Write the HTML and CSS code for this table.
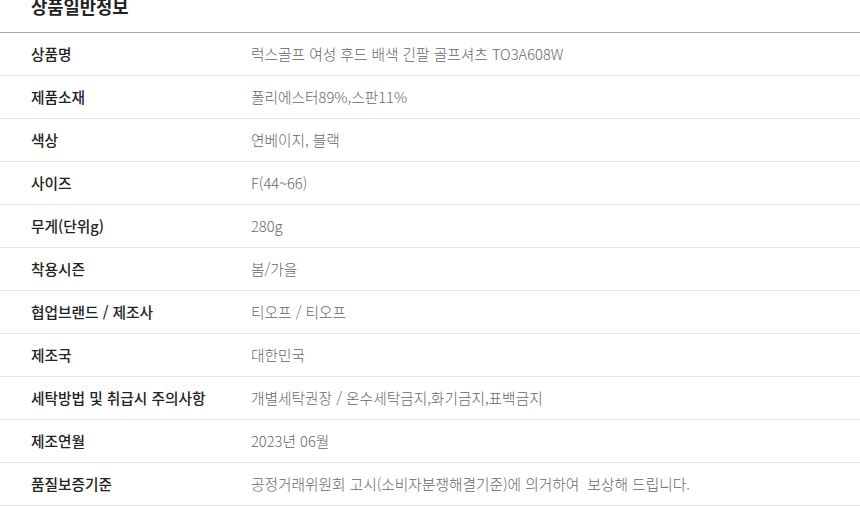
FILE: index.html
```html
<!DOCTYPE html>
<html lang="ko">
<head>
<meta charset="utf-8">
<link rel="stylesheet" href="styles.css">
</head>
<body>
<div class="info">
  <div class="info-head"><h2 class="info-title">상품일반정보</h2></div>
  <div class="info-table">
    <div class="row"><div class="label">상품명</div><div class="value">럭스골프 여성 후드 배색 긴팔 골프셔츠 TO3A608W</div></div>
    <div class="row"><div class="label">제품소재</div><div class="value">폴리에스터89%,스판11%</div></div>
    <div class="row"><div class="label">색상</div><div class="value">연베이지, 블랙</div></div>
    <div class="row"><div class="label">사이즈</div><div class="value">F(44~66)</div></div>
    <div class="row"><div class="label">무게(단위g)</div><div class="value">280g</div></div>
    <div class="row"><div class="label">착용시즌</div><div class="value">봄/가을</div></div>
    <div class="row"><div class="label">협업브랜드 / 제조사</div><div class="value">티오프 / 티오프</div></div>
    <div class="row"><div class="label">제조국</div><div class="value">대한민국</div></div>
    <div class="row"><div class="label">세탁방법 및 취급시 주의사항</div><div class="value">개별세탁권장 / 온수세탁금지,화기금지,표백금지</div></div>
    <div class="row"><div class="label">제조연월</div><div class="value">2023년 06월</div></div>
    <div class="row"><div class="label">품질보증기준</div><div class="value">공정거래위원회 고시(소비자분쟁해결기준)에 의거하여&nbsp; 보상해 드립니다.</div></div>
  </div>
</div>
</body>
</html>
```
FILE: styles.css
```css
html, body {
  margin: 0;
  padding: 0;
  background: #fff;
}
body {
  font-family: "Noto Sans CJK KR", "Noto Sans", sans-serif;
  color: #222;
}
.info-head {
  height: 32px;
  overflow: hidden;
  border-bottom: 1px solid #a9a9a9;
}
.info-title {
  margin: -4px 0 0;
  padding-left: 31px;
  font-size: 17.7px;
  line-height: 20px;
  font-weight: 700;
  color: #222;
}
.row {
  display: grid;
  grid-template-columns: 220px 1fr;
  padding-left: 31px;
  height: 42px;
  border-bottom: 1px solid #e3e3e3;
  font-size: 14.7px;
  line-height: 42px;
}
.label {
  font-weight: 500;
  color: #222;
  white-space: nowrap;
}
.value {
  font-weight: 300;
  color: #666;
  white-space: nowrap;
}
```
